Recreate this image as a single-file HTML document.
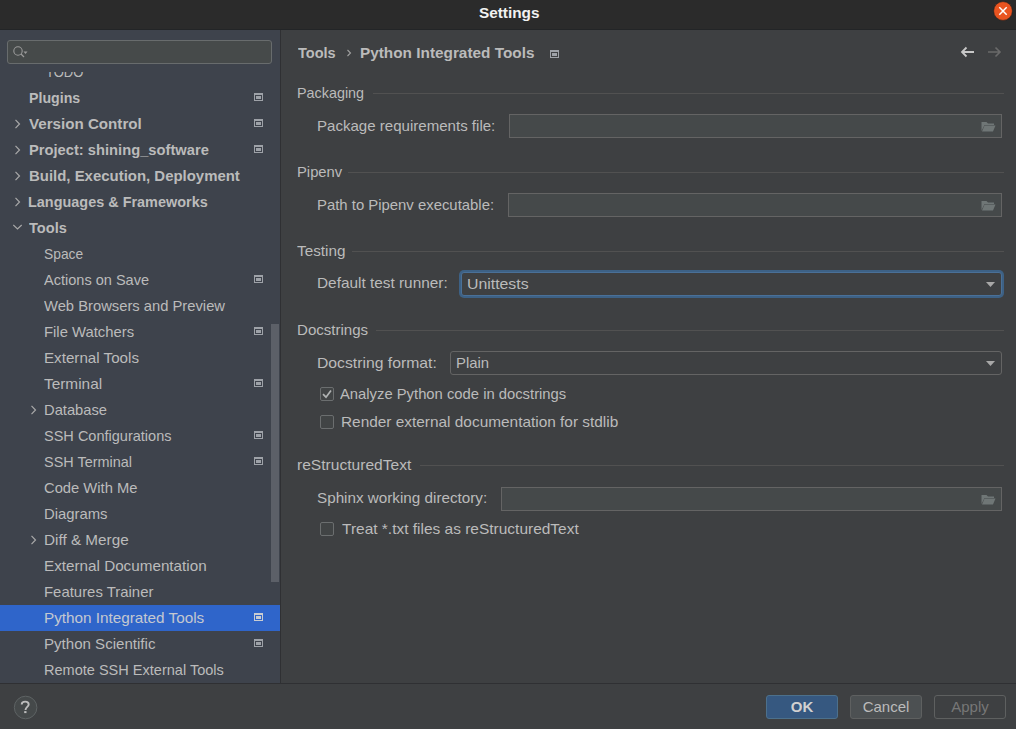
<!DOCTYPE html>
<html><head><meta charset="utf-8"><style>
html,body{margin:0;padding:0;}
body{width:1016px;height:729px;position:relative;overflow:hidden;background:#3e4042;font-family:"Liberation Sans", sans-serif;font-size:15px;}
.t{position:absolute;white-space:nowrap;line-height:26px;height:26px;font-size:15px;}
svg{display:block}
</style></head><body>
<div style="position:absolute;left:0px;top:0px;width:1016px;height:29px;background:#2b2b2b"></div>
<div style="position:absolute;left:0px;top:29px;width:1016px;height:1px;background:#232527"></div>
<div class="t" style="left:479.40px;top:-0.2px;font-weight:bold;color:#f2f2f2;font-size:15px;transform:scaleX(1.0220);transform-origin:0 0;">Settings</div>
<svg style="position:absolute;left:993px;top:1px" width="20" height="20" viewBox="0 0 20 20"><circle cx="10" cy="10" r="9.4" fill="#e95420" stroke="#1e1e1e" stroke-width="0.6"/><path d="M6.3 6.3L13.7 13.7M13.7 6.3L6.3 13.7" stroke="#fff" stroke-width="1.5"/></svg>
<div style="position:absolute;left:0px;top:30px;width:280px;height:653px;background:#3e434c"></div>
<div style="position:absolute;left:280px;top:30px;width:1px;height:653px;background:#2f3033"></div>
<div style="position:absolute;left:281px;top:30px;width:735px;height:653px;background:#3e4042"></div>
<div style="position:absolute;left:0px;top:683px;width:1016px;height:1px;background:#2f3033"></div>
<div style="position:absolute;left:0px;top:684px;width:1016px;height:45px;background:#3e4042"></div>
<div style="position:absolute;left:7px;top:40px;width:264px;height:23px;background:#464a4a;border:1px solid #686c6d;border-radius:3px;box-sizing:border-box;width:265px;height:24px"></div>
<svg style="position:absolute;left:12px;top:45px" width="16" height="14" viewBox="0 0 16 14"><circle cx="6" cy="6" r="4.2" fill="none" stroke="#9a9a9a" stroke-width="1.1"/><path d="M9 9L12 12" stroke="#9a9a9a" stroke-width="1.3"/><path d="M11.5 6.5h4l-2 2.5z" fill="#9a9a9a"/></svg>
<div style="position:absolute;left:0;top:72px;width:280px;height:611px;overflow:hidden">
<div class="t" style="left:46.10px;top:-13px;color:#bbbbbb;transform:scaleX(0.8674);transform-origin:0 0">TODO</div>
<div class="t" style="left:28.50px;top:13px;font-weight:bold;color:#bbbbbb;transform:scaleX(0.9454);transform-origin:0 0">Plugins</div>
<svg style="position:absolute;left:254px;top:21px" width="9" height="8" viewBox="0 0 9 8"><rect x="0" y="0" width="9" height="8" fill="#9ea2a8"/><rect x="1" y="2" width="7" height="5" fill="#3e434c"/><rect x="2" y="3" width="5" height="3" fill="#9ea2a8"/></svg>
<div class="t" style="left:28.60px;top:39px;font-weight:bold;color:#bbbbbb;transform:scaleX(1.0098);transform-origin:0 0">Version Control</div>
<svg style="position:absolute;left:14px;top:47px" width="8" height="10" viewBox="0 0 8 10"><path d="M1.5 0.8L5.5 5L1.5 9.2" fill="none" stroke="#a8a8a8" stroke-width="1.2"/></svg>
<svg style="position:absolute;left:254px;top:47px" width="9" height="8" viewBox="0 0 9 8"><rect x="0" y="0" width="9" height="8" fill="#9ea2a8"/><rect x="1" y="2" width="7" height="5" fill="#3e434c"/><rect x="2" y="3" width="5" height="3" fill="#9ea2a8"/></svg>
<div class="t" style="left:28.50px;top:65px;font-weight:bold;color:#bbbbbb;transform:scaleX(0.9806);transform-origin:0 0">Project: shining_software</div>
<svg style="position:absolute;left:14px;top:73px" width="8" height="10" viewBox="0 0 8 10"><path d="M1.5 0.8L5.5 5L1.5 9.2" fill="none" stroke="#a8a8a8" stroke-width="1.2"/></svg>
<svg style="position:absolute;left:254px;top:73px" width="9" height="8" viewBox="0 0 9 8"><rect x="0" y="0" width="9" height="8" fill="#9ea2a8"/><rect x="1" y="2" width="7" height="5" fill="#3e434c"/><rect x="2" y="3" width="5" height="3" fill="#9ea2a8"/></svg>
<div class="t" style="left:28.50px;top:91px;font-weight:bold;color:#bbbbbb;transform:scaleX(0.9960);transform-origin:0 0">Build, Execution, Deployment</div>
<svg style="position:absolute;left:14px;top:99px" width="8" height="10" viewBox="0 0 8 10"><path d="M1.5 0.8L5.5 5L1.5 9.2" fill="none" stroke="#a8a8a8" stroke-width="1.2"/></svg>
<div class="t" style="left:28.20px;top:117px;font-weight:bold;color:#bbbbbb;transform:scaleX(0.9623);transform-origin:0 0">Languages &amp; Frameworks</div>
<svg style="position:absolute;left:14px;top:125px" width="8" height="10" viewBox="0 0 8 10"><path d="M1.5 0.8L5.5 5L1.5 9.2" fill="none" stroke="#a8a8a8" stroke-width="1.2"/></svg>
<div class="t" style="left:28.50px;top:143px;font-weight:bold;color:#bbbbbb;transform:scaleX(0.9718);transform-origin:0 0">Tools</div>
<svg style="position:absolute;left:13px;top:152px" width="10" height="8" viewBox="0 0 10 8"><path d="M0.3 1L4.5 5L8.7 1" fill="none" stroke="#a8a8a8" stroke-width="1.2"/></svg>
<div class="t" style="left:43.90px;top:169px;color:#bbbbbb;transform:scaleX(0.9198);transform-origin:0 0">Space</div>
<div class="t" style="left:43.70px;top:195px;color:#bbbbbb;transform:scaleX(0.9690);transform-origin:0 0">Actions on Save</div>
<svg style="position:absolute;left:254px;top:203px" width="9" height="8" viewBox="0 0 9 8"><rect x="0" y="0" width="9" height="8" fill="#9ea2a8"/><rect x="1" y="2" width="7" height="5" fill="#3e434c"/><rect x="2" y="3" width="5" height="3" fill="#9ea2a8"/></svg>
<div class="t" style="left:43.70px;top:221px;color:#bbbbbb;transform:scaleX(0.9840);transform-origin:0 0">Web Browsers and Preview</div>
<div class="t" style="left:43.65px;top:247px;color:#bbbbbb;transform:scaleX(0.9884);transform-origin:0 0">File Watchers</div>
<svg style="position:absolute;left:254px;top:255px" width="9" height="8" viewBox="0 0 9 8"><rect x="0" y="0" width="9" height="8" fill="#9ea2a8"/><rect x="1" y="2" width="7" height="5" fill="#3e434c"/><rect x="2" y="3" width="5" height="3" fill="#9ea2a8"/></svg>
<div class="t" style="left:43.65px;top:273px;color:#bbbbbb;transform:scaleX(1.0111);transform-origin:0 0">External Tools</div>
<div class="t" style="left:44.00px;top:299px;color:#bbbbbb;transform:scaleX(1.0254);transform-origin:0 0">Terminal</div>
<svg style="position:absolute;left:254px;top:307px" width="9" height="8" viewBox="0 0 9 8"><rect x="0" y="0" width="9" height="8" fill="#9ea2a8"/><rect x="1" y="2" width="7" height="5" fill="#3e434c"/><rect x="2" y="3" width="5" height="3" fill="#9ea2a8"/></svg>
<div class="t" style="left:44.40px;top:325px;color:#bbbbbb;transform:scaleX(0.9820);transform-origin:0 0">Database</div>
<svg style="position:absolute;left:30px;top:333px" width="8" height="10" viewBox="0 0 8 10"><path d="M1.5 0.8L5.5 5L1.5 9.2" fill="none" stroke="#a8a8a8" stroke-width="1.2"/></svg>
<div class="t" style="left:44.00px;top:351px;color:#bbbbbb;transform:scaleX(0.9678);transform-origin:0 0">SSH Configurations</div>
<svg style="position:absolute;left:254px;top:359px" width="9" height="8" viewBox="0 0 9 8"><rect x="0" y="0" width="9" height="8" fill="#9ea2a8"/><rect x="1" y="2" width="7" height="5" fill="#3e434c"/><rect x="2" y="3" width="5" height="3" fill="#9ea2a8"/></svg>
<div class="t" style="left:44.00px;top:377px;color:#bbbbbb;transform:scaleX(0.9621);transform-origin:0 0">SSH Terminal</div>
<svg style="position:absolute;left:254px;top:385px" width="9" height="8" viewBox="0 0 9 8"><rect x="0" y="0" width="9" height="8" fill="#9ea2a8"/><rect x="1" y="2" width="7" height="5" fill="#3e434c"/><rect x="2" y="3" width="5" height="3" fill="#9ea2a8"/></svg>
<div class="t" style="left:44.00px;top:403px;color:#bbbbbb;transform:scaleX(0.9837);transform-origin:0 0">Code With Me</div>
<div class="t" style="left:43.65px;top:429px;color:#bbbbbb;transform:scaleX(0.9898);transform-origin:0 0">Diagrams</div>
<div class="t" style="left:43.65px;top:455px;color:#bbbbbb;transform:scaleX(1.0186);transform-origin:0 0">Diff &amp; Merge</div>
<svg style="position:absolute;left:30px;top:463px" width="8" height="10" viewBox="0 0 8 10"><path d="M1.5 0.8L5.5 5L1.5 9.2" fill="none" stroke="#a8a8a8" stroke-width="1.2"/></svg>
<div class="t" style="left:43.65px;top:481px;color:#bbbbbb;transform:scaleX(1.0159);transform-origin:0 0">External Documentation</div>
<div class="t" style="left:43.65px;top:507px;color:#bbbbbb;transform:scaleX(0.9940);transform-origin:0 0">Features Trainer</div>
<div style="position:absolute;left:0;top:533px;width:280px;height:26px;background:#2f65ca"></div>
<div class="t" style="left:43.65px;top:533px;color:#c4c8d0;transform:scaleX(1.0181);transform-origin:0 0">Python Integrated Tools</div>
<svg style="position:absolute;left:254px;top:541px" width="9" height="8" viewBox="0 0 9 8"><rect x="0" y="0" width="9" height="8" fill="#c9ccd1"/><rect x="1" y="2" width="7" height="5" fill="#2f65ca"/><rect x="2" y="3" width="5" height="3" fill="#c9ccd1"/></svg>
<div class="t" style="left:43.65px;top:559px;color:#bbbbbb;transform:scaleX(1.0049);transform-origin:0 0">Python Scientific</div>
<svg style="position:absolute;left:254px;top:567px" width="9" height="8" viewBox="0 0 9 8"><rect x="0" y="0" width="9" height="8" fill="#9ea2a8"/><rect x="1" y="2" width="7" height="5" fill="#3e434c"/><rect x="2" y="3" width="5" height="3" fill="#9ea2a8"/></svg>
<div class="t" style="left:43.65px;top:585px;color:#bbbbbb;transform:scaleX(0.9685);transform-origin:0 0">Remote SSH External Tools</div>
<div style="position:absolute;left:271px;top:252px;width:8px;height:258px;background:#5c6068"></div>
</div>
<div class="t" style="left:297.70px;top:39.8px;font-weight:bold;color:#bbbbbb;font-size:15px;transform:scaleX(0.9692);transform-origin:0 0;">Tools</div>
<svg style="position:absolute;left:346px;top:48px" width="6" height="10" viewBox="0 0 6 10"><path d="M1.5 2L4.5 5L1.5 8" fill="none" stroke="#a0a0a0" stroke-width="1.1"/></svg>
<div class="t" style="left:360.30px;top:39.8px;font-weight:bold;color:#bbbbbb;font-size:15px;transform:scaleX(1.0228);transform-origin:0 0;">Python Integrated Tools</div>
<svg style="position:absolute;left:550px;top:50px" width="9" height="8" viewBox="0 0 9 8"><rect x="0" y="0" width="9" height="8" fill="#9ea2a8"/><rect x="1" y="2" width="7" height="5" fill="#3e4042"/><rect x="2" y="3" width="5" height="3" fill="#9ea2a8"/></svg>
<svg style="position:absolute;left:960px;top:46px" width="16" height="12" viewBox="0 0 16 12"><path d="M2 6H14M6.5 1.5L2 6L6.5 10.5" fill="none" stroke="#c8c8c8" stroke-width="1.8"/></svg>
<svg style="position:absolute;left:986px;top:46px" width="16" height="12" viewBox="0 0 16 12"><path d="M2 6H14M9.5 1.5L14 6L9.5 10.5" fill="none" stroke="#6a6a6a" stroke-width="1.6"/></svg>
<div class="t" style="left:297.40px;top:80.2px;color:#bbbbbb;font-size:15px;transform:scaleX(0.9571);transform-origin:0 0;">Packaging</div>
<div style="position:absolute;left:373px;top:93px;width:631px;height:1px;background:#515151"></div>
<div class="t" style="left:316.60px;top:112.8px;color:#bbbbbb;font-size:15px;transform:scaleX(1.0039);transform-origin:0 0;">Package requirements file:</div>
<div style="position:absolute;left:509px;top:114px;width:493px;height:24px;box-sizing:border-box;background:#45494a;border:1px solid #646464"></div>
<svg style="position:absolute;left:981px;top:121px" width="15" height="11" viewBox="0 0 15 11"><path d="M0.5 1h5l1.5 1.5h6v1.5H3.5L0.5 10z" fill="#6f7676"/><path d="M3.5 4.5H14.5L12 10.5H1z" fill="#6f7676"/></svg>
<div class="t" style="left:296.70px;top:159.0px;color:#bbbbbb;font-size:15px;transform:scaleX(0.9848);transform-origin:0 0;">Pipenv</div>
<div style="position:absolute;left:348px;top:172px;width:656px;height:1px;background:#515151"></div>
<div class="t" style="left:317.00px;top:191.8px;color:#bbbbbb;font-size:15px;transform:scaleX(0.9921);transform-origin:0 0;">Path to Pipenv executable:</div>
<div style="position:absolute;left:508px;top:193px;width:494px;height:24px;box-sizing:border-box;background:#45494a;border:1px solid #646464"></div>
<svg style="position:absolute;left:981px;top:200px" width="15" height="11" viewBox="0 0 15 11"><path d="M0.5 1h5l1.5 1.5h6v1.5H3.5L0.5 10z" fill="#6f7676"/><path d="M3.5 4.5H14.5L12 10.5H1z" fill="#6f7676"/></svg>
<div class="t" style="left:297.40px;top:237.8px;color:#bbbbbb;font-size:15px;transform:scaleX(1.0188);transform-origin:0 0;">Testing</div>
<div style="position:absolute;left:352px;top:251px;width:652px;height:1px;background:#515151"></div>
<div class="t" style="left:316.60px;top:270.3px;color:#bbbbbb;font-size:15px;transform:scaleX(1.0242);transform-origin:0 0;">Default test runner:</div>
<div style="position:absolute;left:461px;top:272px;width:541px;height:24px;box-sizing:border-box;background:#3e4042;border:1px solid #4a7097;border-radius:3px;box-shadow:0 0 0 2px #3d6185"></div>
<div class="t" style="left:466.80px;top:270.8px;color:#bbbbbb;font-size:15px;transform:scaleX(1.0552);transform-origin:0 0;">Unittests</div>
<svg style="position:absolute;left:986px;top:282px" width="9" height="5" viewBox="0 0 9 5"><path d="M0 0H9L4.5 5z" fill="#a8a8a8"/></svg>
<div class="t" style="left:296.70px;top:316.8px;color:#bbbbbb;font-size:15px;transform:scaleX(1.0042);transform-origin:0 0;">Docstrings</div>
<div style="position:absolute;left:376px;top:330px;width:628px;height:1px;background:#515151"></div>
<div class="t" style="left:316.60px;top:349.8px;color:#bbbbbb;font-size:15px;transform:scaleX(1.0491);transform-origin:0 0;">Docstring format:</div>
<div style="position:absolute;left:450px;top:351px;width:552px;height:24px;box-sizing:border-box;background:#3e4042;border:1px solid #646464;border-radius:3px"></div>
<div class="t" style="left:456.10px;top:349.8px;color:#bbbbbb;font-size:15px;transform:scaleX(0.9909);transform-origin:0 0;">Plain</div>
<svg style="position:absolute;left:986px;top:361px" width="9" height="5" viewBox="0 0 9 5"><path d="M0 0H9L4.5 5z" fill="#a8a8a8"/></svg>
<div style="position:absolute;left:320px;top:387px;width:14px;height:14px;box-sizing:border-box;background:#414445;border:1px solid #6b6e6f;border-radius:2px"></div>
<svg style="position:absolute;left:320px;top:387px" width="14" height="14" viewBox="0 0 14 14"><path d="M3 7.2L6 10.2L11 3.5" fill="none" stroke="#b0b3b3" stroke-width="1.7"/></svg>
<div class="t" style="left:340.10px;top:380.8px;color:#bbbbbb;font-size:15px;transform:scaleX(0.9865);transform-origin:0 0;">Analyze Python code in docstrings</div>
<div style="position:absolute;left:320px;top:415px;width:14px;height:14px;box-sizing:border-box;background:#414445;border:1px solid #6b6e6f;border-radius:2px"></div>
<div class="t" style="left:341.00px;top:408.8px;color:#bbbbbb;font-size:15px;transform:scaleX(1.0263);transform-origin:0 0;">Render external documentation for stdlib</div>
<div class="t" style="left:297.00px;top:451.8px;color:#bbbbbb;font-size:15px;transform:scaleX(1.0387);transform-origin:0 0;">reStructuredText</div>
<div style="position:absolute;left:420px;top:465px;width:584px;height:1px;background:#515151"></div>
<div class="t" style="left:317.20px;top:484.8px;color:#bbbbbb;font-size:15px;transform:scaleX(1.0155);transform-origin:0 0;">Sphinx working directory:</div>
<div style="position:absolute;left:501px;top:487px;width:501px;height:24px;box-sizing:border-box;background:#45494a;border:1px solid #646464"></div>
<svg style="position:absolute;left:981px;top:494px" width="15" height="11" viewBox="0 0 15 11"><path d="M0.5 1h5l1.5 1.5h6v1.5H3.5L0.5 10z" fill="#6f7676"/><path d="M3.5 4.5H14.5L12 10.5H1z" fill="#6f7676"/></svg>
<div style="position:absolute;left:320px;top:522px;width:14px;height:14px;box-sizing:border-box;background:#414445;border:1px solid #6b6e6f;border-radius:2px"></div>
<div class="t" style="left:341.60px;top:515.8px;color:#bbbbbb;font-size:15px;transform:scaleX(1.0313);transform-origin:0 0;">Treat *.txt files as reStructuredText</div>
<svg style="position:absolute;left:13px;top:695px" width="25" height="25" viewBox="0 0 25 25"><circle cx="12.6" cy="12.5" r="11.3" fill="#45494a" stroke="#5e6364" stroke-width="1"/><path d="M8.7 9.4C8.7 7.4 10.3 6.6 12.2 6.6C14.2 6.6 15.7 7.7 15.7 9.4C15.7 11.6 12.5 12.2 12.5 14.9" fill="none" stroke="#bdbdbd" stroke-width="1.9"/><rect x="11.2" y="16.1" width="2.3" height="2" fill="#bdbdbd"/></svg>
<div style="position:absolute;left:766px;top:695px;width:72px;height:24px;box-sizing:border-box;background:#365880;border:1px solid #4c708c;border-radius:3px"></div>
<div class="t" style="left:766px;width:72px;text-align:center;top:693.8px;font-weight:bold;color:#d0d0d0">OK</div>
<div style="position:absolute;left:850px;top:695px;width:72px;height:24px;box-sizing:border-box;background:#4c5052;border:1px solid #5e6060;border-radius:3px"></div>
<div class="t" style="left:850px;width:72px;text-align:center;top:693.8px;color:#bbbbbb">Cancel</div>
<div style="position:absolute;left:934px;top:695px;width:72px;height:24px;box-sizing:border-box;background:#3e4042;border:1px solid #5e6060;border-radius:3px"></div>
<div class="t" style="left:934px;width:72px;text-align:center;top:693.8px;color:#777777">Apply</div>
</body></html>
